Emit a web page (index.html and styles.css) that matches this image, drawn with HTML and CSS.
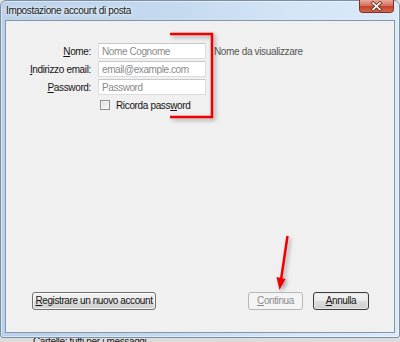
FILE: index.html
```html
<!DOCTYPE html>
<html lang="it">
<head>
<meta charset="utf-8">
<title>Impostazione account di posta</title>
<link rel="stylesheet" href="styles.css">
</head>
<body>
<div class="window">
  <div class="titlebar">
    <span class="title">Impostazione account di posta</span>
    <div class="close">
      <svg width="35" height="13" viewBox="0 0 35 13">
        <defs>
          <linearGradient id="cg" x1="0" y1="0" x2="0" y2="1">
            <stop offset="0" stop-color="#e9a99b"/>
            <stop offset="0.45" stop-color="#d2705c"/>
            <stop offset="0.5" stop-color="#c2432c"/>
            <stop offset="1" stop-color="#d66a50"/>
          </linearGradient>
        </defs>
        <path d="M0.5 0 V9.5 A3 3 0 0 0 3.5 12.5 H31.5 A3 3 0 0 0 34.5 9.5 V0" fill="url(#cg)" stroke="#7e2e22"/>
        <path d="M14 3 L21 9.5 M21 3 L14 9.5" stroke="#5a2a24" stroke-width="3.2" stroke-linecap="square"/>
        <path d="M14 3 L21 9.5 M21 3 L14 9.5" stroke="#ffffff" stroke-width="1.7" stroke-linecap="square"/>
      </svg>
    </div>
  </div>
  <div class="client">
    <div class="form">
      <span class="lbl"><u>N</u>ome:</span>
      <input class="field" type="text" placeholder="Nome Cognome">
      <span class="hint">Nome da visualizzare</span>

      <span class="lbl"><u>I</u>ndirizzo email:</span>
      <input class="field" type="text" placeholder="email@example.com">
      <span></span>

      <span class="lbl"><u>P</u>assword:</span>
      <input class="field" type="text" placeholder="Password">
      <span></span>

      <span></span>
      <span class="check"><span class="box"></span><span class="check-text">Ricorda pass<u>w</u>ord</span></span>
      <span></span>
    </div>
    <div class="buttons">
      <button class="btn btn-wide"><u>R</u>egistrare un nuovo account</button>
      <span class="spacer"></span>
      <button class="btn btn-disabled"><u>C</u>ontinua</button>
      <button class="btn btn-default"><u>A</u>nnulla</button>
    </div>
  </div>
</div>
<div class="behind">Cartelle: tutti per i messaggi</div>

<svg class="annot" width="400" height="342" viewBox="0 0 400 342">
  <defs>
    <filter id="sh" x="-20%" y="-20%" width="140%" height="140%">
      <feGaussianBlur in="SourceAlpha" stdDeviation="2"/>
      <feOffset dx="2" dy="2" result="b"/>
      <feComponentTransfer><feFuncA type="linear" slope="0.35"/></feComponentTransfer>
      <feMerge><feMergeNode/><feMergeNode in="SourceGraphic"/></feMerge>
    </filter>
  </defs>
  <g filter="url(#sh)">
    <polyline points="170,34 212,34 212,117 170,117" fill="none" stroke="#ee0000" stroke-width="2.5"/>
    <path d="M287.5 236 L281 280" stroke="#ee0000" stroke-width="2.5" fill="none"/>
    <path d="M276.5 277 L285.5 279 L279.5 290 Z" fill="#ee0000"/>
  </g>
</svg>
</body>
</html>
```

FILE: styles.css
```css
html, body {
  margin: 0;
  padding: 0;
}
body {
  width: 400px;
  height: 342px;
  overflow: hidden;
  background: #e4e4e4;
  position: relative;
  font-family: "Liberation Sans", Arial, sans-serif;
  font-size: 10px;
  letter-spacing: -0.35px;
  color: #141414;
}
u { text-decoration: underline; text-underline-offset: 1px; }

.window {
  box-sizing: border-box;
  width: 400px;
  height: 338px;
  display: flex;
  flex-direction: column;
  border: 1px solid #7d8fa3;
  border-radius: 6px 6px 3px 3px;
  background: linear-gradient(to right, #b9d1ea 0%, #c6daef 45%, #d5e6f7 75%, #dbe9f8 100%);
  box-shadow: inset 0 0 0 1px rgba(255,255,255,0.45);
}

.titlebar {
  height: 19px;
  display: flex;
  justify-content: space-between;
  align-items: flex-start;
  padding-left: 5px;
  padding-right: 5px;
}
.title {
  margin-top: 4px;
  line-height: 12px;
  font-size: 10px;
  color: #1a1a1a;
  white-space: nowrap;
  text-shadow: 0 0 6px rgba(255,255,255,0.9), 0 0 3px rgba(255,255,255,0.9);
}
.close {
  margin-top: -1px;
  width: 35px;
  height: 13px;
  line-height: 0;
}

.client {
  box-sizing: border-box;
  margin: 0 4px;
  height: 313px;
  background: #f0f0f0;
  border: 1px solid #8696aa;
  display: flex;
  flex-direction: column;
}

.form {
  display: grid;
  grid-template-columns: 85px 108px auto;
  grid-auto-rows: 16px;
  column-gap: 7px;
  row-gap: 2px;
  padding-top: 22px;
  align-items: center;
}
.lbl {
  text-align: right;
  white-space: nowrap;
}
.field {
  box-sizing: border-box;
  width: 108px;
  height: 16px;
  margin: 0;
  padding: 0 0 0 3px;
  border: 1px solid #dadcdf;
  border-top-color: #c6c8cc;
  background: #ffffff;
  font-family: inherit;
  font-size: 10px;
  letter-spacing: -0.4px;
  color: #333;
  outline: none;
}
.field::placeholder {
  color: #8a8a8a;
  opacity: 1;
}
.hint {
  margin-left: 1px;
  color: #555555;
  white-space: nowrap;
}
.check {
  display: flex;
  align-items: center;
  gap: 6px;
  padding-left: 2px;
  white-space: nowrap;
}
.box {
  flex: 0 0 auto;
  box-sizing: border-box;
  width: 10px;
  height: 10px;
  border: 1px solid #8f8f8f;
  background: linear-gradient(135deg, #dcdcdc, #fbfbfb);
  box-shadow: inset 0 0 0 1px #f4f4f4;
}
.check-text { white-space: nowrap; }

.buttons {
  margin-top: auto;
  display: flex;
  align-items: center;
  gap: 10px;
  padding: 0 25px 22px 26px;
}
.spacer { flex: 1; }
.btn {
  box-sizing: border-box;
  flex: 0 0 auto;
  height: 18px;
  margin: 0;
  padding: 0;
  white-space: nowrap;
  border: 1px solid #707070;
  border-radius: 3px;
  background: linear-gradient(to bottom, #f2f2f2 0%, #ebebeb 50%, #dddddd 50%, #cfcfcf 100%);
  box-shadow: inset 0 0 0 1px rgba(255,255,255,0.7);
  font-family: inherit;
  font-size: 10px;
  letter-spacing: -0.4px;
  color: #141414;
  line-height: 14px;
}
.btn-wide { width: 124px; }
.btn-disabled {
  width: 55px;
  border-color: #b5b8ba;
  background: #f4f4f4;
  box-shadow: none;
  color: #8c8c8c;
}
.btn-default {
  width: 56px;
  border-color: #3c3c3c;
  box-shadow: inset 0 0 0 1px #e6e6e6;
}

.behind {
  height: 4px;
  overflow: hidden;
  padding-left: 33px;
  font-size: 10px;
  line-height: 7px;
  color: #222;
  background: #dcdcdc;
}

.annot {
  position: absolute;
  left: 0;
  top: 0;
  pointer-events: none;
}
```
